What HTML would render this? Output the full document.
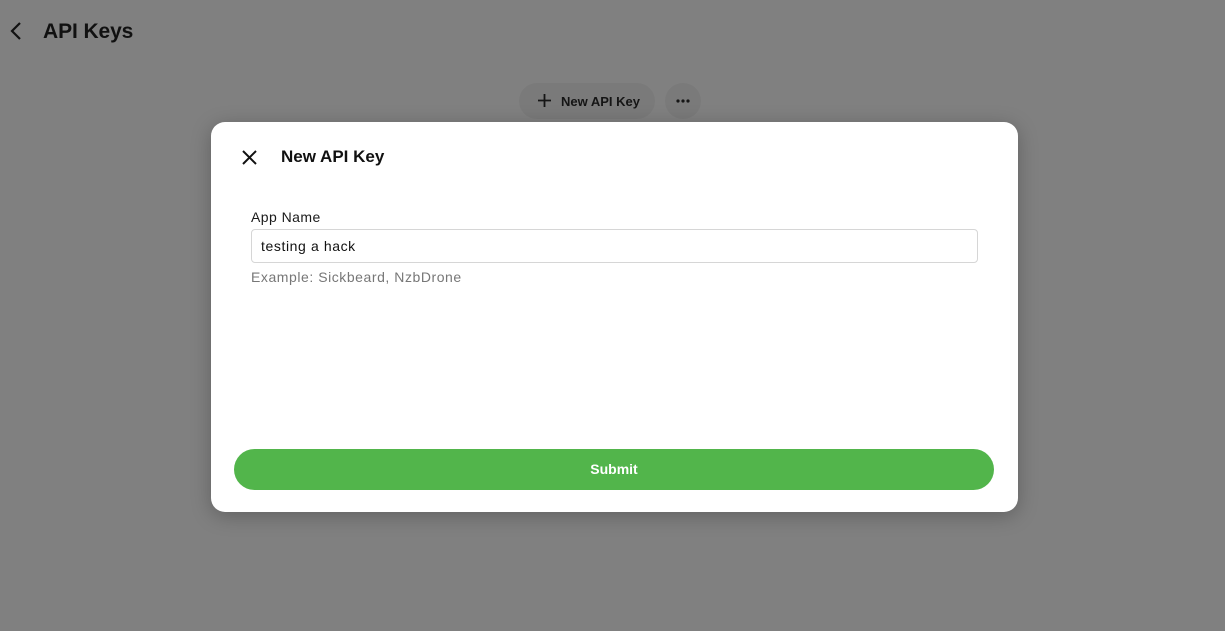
<!DOCTYPE html>
<html><head><meta charset="utf-8"><style>
*{box-sizing:border-box;margin:0;padding:0}
body{width:1225px;height:631px;background:#808080;font-family:"Liberation Sans",sans-serif;position:relative;overflow:hidden;color:#1a1a1a}
.title{position:absolute;left:43px;top:20px;font-size:21px;font-weight:bold;color:#111;letter-spacing:-0.1px}
.back{position:absolute;left:9px;top:20px}
.pill{position:absolute;left:519px;top:83px;width:136px;height:36px;border-radius:18px;background:#7a7a7a;font-size:13px;font-weight:bold;color:#151515}
.pill span{position:absolute;left:42px;top:11px}
.dots{position:absolute;left:665px;top:83px;width:36px;height:36px;border-radius:18px;background:#7a7a7a}
.modal{position:absolute;left:211px;top:122px;width:807px;height:390px;background:#fff;border-radius:14px;box-shadow:0 4px 20px rgba(0,0,0,.25)}
.mt{position:absolute;left:70px;top:25px;font-size:17px;font-weight:bold;color:#111}
.x{position:absolute;left:30px;top:27px}
.lab{position:absolute;left:40px;top:87px;font-size:14px;color:#1a1a1a;letter-spacing:0.45px}
.inp{position:absolute;left:40px;top:107px;width:727px;height:34px;border:1px solid #d6d6d6;border-radius:4px;font-size:14px;padding:8px 9px;color:#111;letter-spacing:0.6px}
.hint{position:absolute;left:40px;top:147px;font-size:14px;color:#777;letter-spacing:0.55px}
.btn{position:absolute;left:23px;top:327px;width:760px;height:41px;border-radius:21px;background:#52b54b;color:#fff;font-size:14px;font-weight:bold;text-align:center;line-height:41px}
</style></head><body>
<svg class="back" width="14" height="22" viewBox="0 0 14 22"><path d="M11 3 L3 11 L11 19" fill="none" stroke="#111" stroke-width="2.2"/></svg>
<div class="title">API Keys</div>
<div class="pill"><svg style="position:absolute;left:19px;top:11px" width="13" height="13"><path d="M6.5 0V13M0 6.5H13" stroke="#151515" stroke-width="1.8"/></svg><span>New API Key</span></div>
<div class="dots"><svg style="position:absolute;left:11px;top:16px" width="14" height="4"><circle cx="2" cy="2" r="1.6" fill="#151515"/><circle cx="7" cy="2" r="1.6" fill="#151515"/><circle cx="12" cy="2" r="1.6" fill="#151515"/></svg></div>
<div class="modal">
<svg class="x" width="17" height="17" viewBox="0 0 17 17"><path d="M2 2L15 15M15 2L2 15" stroke="#111" stroke-width="2"/></svg>
<div class="mt">New API Key</div>
<div class="lab">App Name</div>
<div class="inp">testing a hack</div>
<div class="hint">Example: Sickbeard, NzbDrone</div>
<div class="btn">Submit</div>
</div>
</body></html>
